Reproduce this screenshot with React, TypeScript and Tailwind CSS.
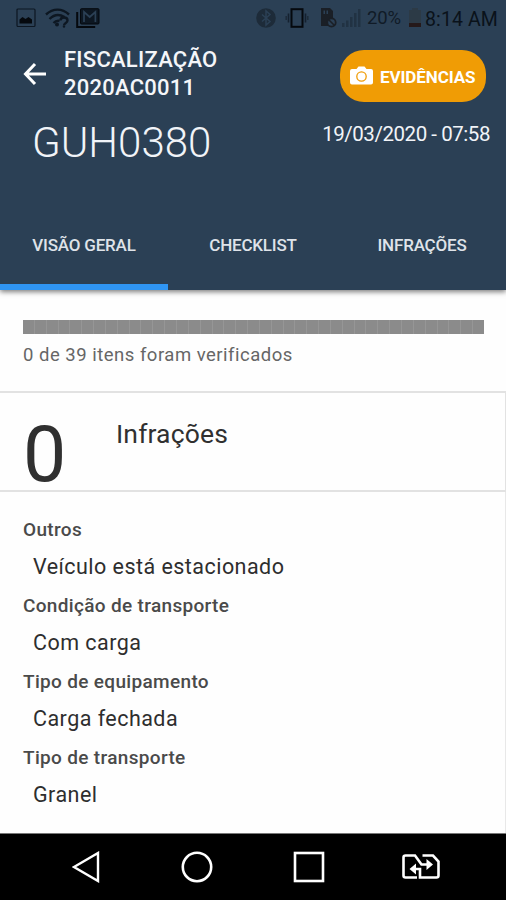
import { useState } from 'react'

const TABS = [
  { key: 'overview', label: 'VISÃO GERAL' },
  { key: 'checklist', label: 'CHECKLIST' },
  { key: 'infractions', label: 'INFRAÇÕES' },
] as const

type TabKey = typeof TABS[number]['key']

const DETAILS = [
  { label: 'Outros', value: 'Veículo está estacionado' },
  { label: 'Condição de transporte', value: 'Com carga' },
  { label: 'Tipo de equipamento', value: 'Carga fechada' },
  { label: 'Tipo de transporte', value: 'Granel' },
]

const TOTAL_ITEMS = 39

function StatusBar() {
  return (
    <div className="flex h-9 items-center text-[#0d1722]">
      <svg width="21" height="20" viewBox="0 0 21 20" className="ml-4">
        <rect x="1" y="1" width="18" height="17.500" rx="1" fill="none" stroke="currentColor" strokeWidth="1.2" />
        <path d="M3.500 15.500v-4l3-2.500 3 2 3-2 3.500 2.500v4z" fill="#05090e" />
      </svg>
      <svg width="25" height="20" viewBox="0 0 25 20" className="ml-2">
        <g fill="none" stroke="currentColor" strokeWidth="2.400">
          <path d="M1 6.500C8 0 17 0 24 6.500" />
          <path d="M4.500 11c4.500-4.500 10-5 15-2" />
          <path d="M8.500 15c2-2 4-2.500 6-2" />
        </g>
        <circle cx="12" cy="16.500" r="2" fill="currentColor" />
        <path d="M15.500 12.500c0-4 7-4 7 0 0 2.500-3.500 2.500-3.500 5" fill="none" stroke="currentColor" strokeWidth="2.400" />
        <circle cx="19" cy="18.600" r="1.200" fill="currentColor" />
      </svg>
      <svg width="24" height="20" viewBox="0 0 24 20" className="ml-1.5" fill="none">
        <path d="M1.200 4v15h18" stroke="#05090e" strokeWidth="2" />
        <rect x="4.500" y=".7" width="18.500" height="15.300" rx="1" fill="#0d1722" stroke="#05090e" />
        <path d="M8 14V4l5.700 5 5.700-5v10" stroke="#2b4055" strokeWidth="1.700" />
      </svg>

      <div className="ml-auto flex items-center">
        <svg width="20" height="20" viewBox="0 0 20 20">
          <circle cx="10" cy="10" r="9.800" fill="#1d2b39" />
          <path d="M6 6.500l8 7-4 3.500V3l4 3.500-8 7" fill="none" stroke="#2b4055" strokeWidth="1.500" />
        </svg>
        <svg width="24" height="20" viewBox="0 0 24 20" className="ml-[9px]" fill="none" stroke="#05090e">
          <rect x="6.500" y="1.200" width="11" height="17.600" strokeWidth="2" />
          <path d="M3.500 5.500v9M20.500 5.500v9" strokeWidth="1.600" stroke="#142130" />
          <path d="M1.200 8v4M22.800 8v4" strokeWidth="1.500" stroke="#1d2b39" />
        </svg>
        <svg width="17" height="20" viewBox="0 0 17 20" className="ml-[11px]">
          <path d="M1 0h9l3 3v15H1z" fill="#1a1f26" />
          <path d="M3.500 2.500H5v3.500H3.500zM6.500 2.500H8v3.500H6.500z" fill="#2b4055" />
          <circle cx="11.500" cy="14.500" r="4.200" fill="#2b4055" stroke="#1a1f26" strokeWidth="1.800" />
          <path d="M8.500 11.500l6 6" stroke="#1a1f26" strokeWidth="1.600" />
        </svg>
        <svg width="20" height="20" viewBox="0 0 20 20" className="ml-1" fill="#213243">
          <path d="M1 15h2.500v4H1zM5 12.500h2.500V19H5zM9 9h2.500v10H9zM13 5h2.500v14H13zM17 1h2.500v18H17z" />
        </svg>
        <span className="mt-0.5 ml-1.5 w-[35px] text-[18.500px] tracking-[-0.2px] whitespace-nowrap text-[#101b27]">20%</span>
        <svg width="14" height="20" viewBox="0 0 14 20" className="ml-1.5">
          <path d="M4 0h6v2h3v13H1V2h3z" fill="#2c3a46" />
          <path d="M1 15h12v4H1z" fill="#25191a" />
        </svg>
        <span className="mt-[3px] mr-[7px] ml-[3px] w-[74px] text-[19.500px] tracking-[0.1px] whitespace-nowrap text-[#0a121a]">
          8:14 AM
        </span>
      </div>
    </div>
  )
}

function Header({ active, onChange }: { active: TabKey; onChange: (key: TabKey) => void }) {
  return (
    <header className="relative z-10 flex h-[290px] flex-col bg-[#2b4055] shadow-[0_2px_5px_rgba(0,0,0,0.5)]">
      <StatusBar />

      <div className="flex h-[80px] items-start">
        <button aria-label="Voltar" className="mt-[26px] ml-[22px] h-6 w-6">
          <svg width="24" height="24" viewBox="0 0 24 24" fill="none" stroke="#fff" strokeWidth="3">
            <path d="M24 12H3.500M13 2L3.500 12 13 22" />
          </svg>
        </button>
        <h1 className="mt-[10px] ml-[18px] text-[22px] leading-7 font-medium tracking-[0.25px] text-[#f4f6f9]">
          FISCALIZAÇÃO
          <br />
          2020AC0011
        </h1>
        <button className="mt-[14px] mr-5 ml-auto flex h-[52px] w-[146px] items-center rounded-[24px] bg-[#f09c05] pl-2.5 text-white">
          <svg width="23" height="20" viewBox="0 0 23 20">
            <path d="M2 3h4.500l2-2.500h6l2 2.500H21q2 0 2 2v11.500q0 2-2 2H2q-2 0-2-2V5q0-2 2-2z" fill="#fff" />
            <circle cx="11.500" cy="10.500" r="4.700" fill="none" stroke="#f09c05" strokeWidth="1.300" />
          </svg>
          <span className="mt-[3px] ml-[7px] text-[17px] font-bold tracking-[-0.1px] whitespace-nowrap">EVIDÊNCIAS</span>
        </button>
      </div>

      <div className="flex justify-between pr-4 pl-8">
        <div className="mt-px text-[42px] leading-[52px] font-light whitespace-nowrap text-[#f1f4f8]">GUH0380</div>
        <div className="mt-1 text-[20.500px] leading-7 tracking-[-0.45px] whitespace-nowrap text-[#f1f4f8]">
          19/03/2020 - 07:58
        </div>
      </div>

      <nav className="mt-auto grid h-[90px] grid-cols-[168px_170px_168px]">
        {TABS.map(({ key, label }) => (
          <button
            key={key}
            onClick={() => onChange(key)}
            className={`border-b-[6px] pt-[7px] text-[17px] font-medium tracking-[-0.2px] text-[#dfe3e9] ${
              active === key ? 'border-[#2f95f3]' : 'border-transparent'
            }`}
          >
            {label}
          </button>
        ))}
      </nav>
    </header>
  )
}

function SystemNav() {
  return (
    <footer className="flex h-[67px] items-center border-t border-[#777] bg-black text-white">
      <svg width="28" height="32" viewBox="0 0 28 32" className="ml-[72px]" fill="none" stroke="currentColor" strokeWidth="2.400">
        <path d="M2 16L26 2v28z" />
      </svg>
      <svg width="32" height="32" viewBox="0 0 32 32" className="ml-[81px]" fill="none" stroke="currentColor" strokeWidth="2.600">
        <circle cx="16" cy="16" r="14.200" />
      </svg>
      <svg width="32" height="32" viewBox="0 0 32 32" className="ml-20" fill="none" stroke="currentColor" strokeWidth="2.600">
        <rect x="2" y="2" width="28" height="28" />
      </svg>
      <svg width="38" height="26" viewBox="0 0 38 26" className="ml-[77px]" fill="none" stroke="currentColor" strokeWidth="2.600">
        <path d="M15 23.500H3.500q-2 0-2-2v-18q0-2 2-2H13l6.500 9H27" />
        <path d="M20.500 1.500H31l5.500 6v14q0 2-2 2H18V15h-7" />
        <path d="M24.500 5v11l6.500-5.500zM14 9.500v11L7.500 15z" fill="currentColor" stroke="none" />
      </svg>
    </footer>
  )
}

export default function App() {
  const [active, setActive] = useState<TabKey>('overview')

  return (
    <div className="flex h-[900px] w-[506px] flex-col overflow-hidden bg-[#fefefe] font-['Roboto',sans-serif]">
      <Header active={active} onChange={setActive} />

      <section className="h-[101px] pt-[30px] pr-[22px] pl-[23px]">
        <div className="flex h-[14px] bg-[#8b8b8b]">
          {Array.from({ length: TOTAL_ITEMS }, (_, i) => (
            <div key={i} className="flex-1 border-r border-[#969696] last:border-r-0" />
          ))}
        </div>
        <p className="mt-[9px] text-[18.500px] leading-6 tracking-[0.5px] whitespace-nowrap text-[#666]">
          0 de {TOTAL_ITEMS} itens foram verificados
        </p>
      </section>

      <section className="flex h-[101px] border-y-2 border-r border-[#e2e2e2]">
        <div className="mt-[20px] w-[92px] pl-[23px] text-[77px] leading-[84px] text-[#303030]">0</div>
        <h2 className="mt-[23px] ml-6 text-[26.500px] leading-9 tracking-[0.15px] text-[#303030]">Infrações</h2>
      </section>

      <dl className="flex-1 border-r border-[#e8e8e8] pt-6 pl-[23px]">
        {DETAILS.map(({ label, value }) => (
          <div key={label} className="h-[76px]">
            <dt className="text-[19px] leading-7 font-medium tracking-[0.33px] whitespace-nowrap text-[#4a4a4a]">{label}</dt>
            <dd className="mt-[7px] ml-2.5 text-[21.500px] leading-8 tracking-[0.46px] whitespace-nowrap text-[#2e2e2e]">
              {value}
            </dd>
          </div>
        ))}
      </dl>

      <SystemNav />
    </div>
  )
}
